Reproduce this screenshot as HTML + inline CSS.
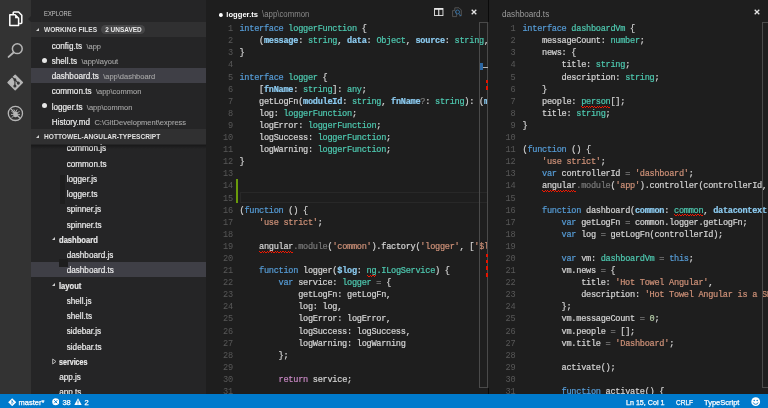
<!DOCTYPE html>
<html><head><meta charset="utf-8"><title>Visual Studio Code</title>
<style>
*{box-sizing:border-box;margin:0;padding:0}
html,body{width:768px;height:408px;overflow:hidden;background:#1e1e1e}
body{position:relative;font-family:"Liberation Sans",sans-serif;font-size:7.9px;color:#ccc}
#act{position:absolute;left:0;top:0;width:31px;height:394px;background:#333}
#act svg{position:absolute;left:0}
#side{position:absolute;left:31px;top:0;width:175px;height:394px;background:#252526;overflow:hidden}
#side .title{position:absolute;left:13px;top:8px;font-size:7.7px;color:#c4c4c4;line-height:11px;transform:scaleX(.765);transform-origin:0 0}
.hdr{position:absolute;left:0;width:175px;background:#303031;color:#e0e0e0;font-weight:bold;font-size:7.6px;white-space:nowrap}
.hdr b{position:absolute;left:13px;top:0;transform:scaleX(.867);transform-origin:0 0}
.hdr .tri{position:absolute;left:4.5px;width:0;height:0;border-style:solid;border-width:0 0 3.4px 3.4px;border-color:transparent transparent #d0d0d0 transparent}
.badge{position:absolute;left:70.3px;top:3.1px;height:8.8px;width:43.7px;border-radius:4.4px;background:#464647;color:#e8e8e8;font-size:6.9px;line-height:9.2px;text-align:center;font-weight:bold}
.badge u{display:inline-block;text-decoration:none;transform:scaleX(.94)}
.row{position:absolute;left:0;width:175px;height:15.25px;line-height:17px;white-space:nowrap;color:#ececec;font-size:8.15px;-webkit-text-stroke:.18px}
.row.sel{background:#3f3f46;height:15px}
#tree .row{line-height:17px}
.row .pa{color:#a6a6a6;-webkit-text-stroke:.1px;font-size:7.5px;margin-left:4.4px}
.row .fo{font-weight:bold;color:#e8e8e8;display:inline-block;transform:scaleX(.935);transform-origin:0 50%}
.dot{position:absolute;left:10.7px;top:4.9px;width:5px;height:5px;border-radius:50%;background:#e6e6e6}
.tw{position:absolute;top:5.6px;margin-left:.2px;width:0;height:0;border-style:solid}
.tw.o{border-width:0 0 3.8px 3.8px;border-color:transparent transparent #d0d0d0 transparent}
.tw.c{top:4.9px;margin-left:.2px;border-width:2.7px 0 2.7px 3.3px;border-color:transparent transparent transparent #b0b0b0}
.twc{position:absolute;top:4.3px}
.blk{position:absolute;background:#1e1e1e}
.shadow{position:absolute;left:0;width:175px;height:4px;background:linear-gradient(rgba(0,0,0,.35),rgba(0,0,0,0))}
.ed{position:absolute;top:0;height:394px;background:#1e1e1e;overflow:hidden}
#e1{left:206px;width:282px}
#e2{left:489px;width:279px}
#sep{position:absolute;left:488px;top:0;width:1px;height:22px;background:#0a0a0a}
#sep2{position:absolute;left:488px;top:388px;width:1px;height:6.2px;background:#0a0a0a}
.ed .tt{position:absolute;top:8.4px;line-height:12px;white-space:nowrap;font-size:8.7px;transform:scaleX(.94);transform-origin:0 0}
.code{position:absolute;left:0;top:23.2px;font-family:"Liberation Mono",monospace;font-size:8.6px;letter-spacing:-0.27px;color:#d4d4d4}
.ln{height:12.1px;line-height:12.1px;position:relative;white-space:pre;-webkit-text-stroke:.2px}
.no{display:inline-block;text-align:right;color:#585858;-webkit-text-stroke:0}
#e1 .ln{padding-left:0}
#e1 .no{width:26.9px;margin-right:6.6px}
#e2 .no{width:26.3px;margin-right:7.2px}
.k{color:#569cd6}.t{color:#4ec9b0}.s{color:#ce9178}.p{color:#8ccbf0;font-weight:bold}.g{color:#7a7a7a}.r{color:#c586c0}.n{color:#b5cea8}
.sq{position:relative}
.sq::after{content:"";position:absolute;left:0;right:0;top:8.8px;height:2.2px;background-image:repeating-linear-gradient(90deg,#f01800 0,#f01800 1.3px,transparent 1.3px,transparent 2.6px),repeating-linear-gradient(90deg,transparent 0,transparent 1.3px,#f01800 1.3px,#f01800 2.6px);background-size:100% 1.2px,100% 1.2px;background-position:0 0,0 1px;background-repeat:no-repeat}
.ruler{position:absolute;top:22px;height:366px;border:1px solid #4a4a4a}
.mk{position:absolute}
#status{position:absolute;left:0;top:394.2px;width:768px;height:14px;background:#007acc;color:#fff;font-size:7.5px;line-height:14px;white-space:nowrap}
#status span{position:absolute;top:1.5px;-webkit-text-stroke:.25px}
#status svg{position:absolute}
</style></head><body style="filter:blur(.35px)">
<div id="act">
 <!-- explorer -->
 <svg width="31" height="32" style="top:0" viewBox="0 0 31 32"><g fill="none" stroke="#fff" stroke-width="1.5" stroke-linejoin="round">
  <path d="M13.2 14v-1.300a.7.7 0 0 1 .7-.7h4.700l3.200 3.200v7.600a.7.700 0 0 1 -.7.700h-1.900"/>
  <path d="M9.800 14.800h5.300l3.500 3.500v7.200h-8.800z"/></g><path d="M15.100 14.800v3.500h3.500z" fill="#fff"/></svg>
 <!-- search -->
 <svg width="31" height="32" style="top:34px" viewBox="0 0 31 32"><g fill="none" stroke="#b6b6b6" stroke-linecap="round"><circle cx="17.3" cy="14.700" r="4.900" stroke-width="1.500"/><path d="M13.300 18.700L8.600 22.900" stroke-width="1.900"/></g></svg>
 <!-- git -->
 <svg width="31" height="140" style="top:0" viewBox="0 0 31 140">
  <path d="M15.200 75.300l7.200 7.200-7.200 7.200-7.200-7.200z" fill="#b6b6b6" stroke="#b6b6b6" stroke-width="1.400" stroke-linejoin="round"/>
  <g stroke="#333" stroke-width="1.100" fill="#333"><path d="M12.300 77.100l5.800 5.800M14.900 80v6" fill="none"/><circle cx="14.900" cy="79.800" r=".9"/><circle cx="14.900" cy="86" r="1"/><circle cx="18.300" cy="83.100" r="1"/></g>
  <!-- debug -->
  <g fill="none" stroke="#b6b6b6" stroke-width="1.300"><circle cx="15.400" cy="113.400" r="7.100"/><path d="M10.400 108.400l10 10"/></g>
  <ellipse cx="15.500" cy="114.200" rx="2.300" ry="3" fill="#b6b6b6"/>
  <g stroke="#b6b6b6" stroke-width=".9" fill="none"><path d="M11.400 111.400l2.400 1.400M11 114.400h2.600M11.600 117.600l2.200-1.600M19.600 111.400l-2.400 1.400M20 114.400h-2.600M19.400 117.600l-2.200-1.600M13.800 109.400l1.200 1.800M17.200 109.400l-1.200 1.800"/></g>
 </svg>
</div>
<div id="side">
 <div class="title">EXPLORE</div>
 <div class="hdr" style="top:22px;height:14.6px;line-height:15.6px"><i class="tri" style="top:5.6px"></i><b>WORKING FILES</b><span class="badge"><u>2 UNSAVED</u></span></div>
<div class="row" style="top:37.50px;padding-left:20.75px"><span class="nm">config.ts</span><span class="pa">\app</span></div>
<div class="row" style="top:52.75px;padding-left:20.75px"><i class="dot"></i><span class="nm">shell.ts</span><span class="pa">\app\layout</span></div>
<div class="row sel" style="top:68.00px;padding-left:20.75px"><span class="nm">dashboard.ts</span><span class="pa">\app\dashboard</span></div>
<div class="row" style="top:83.25px;padding-left:20.75px"><span class="nm">common.ts</span><span class="pa">\app\common</span></div>
<div class="row" style="top:98.50px;padding-left:20.75px"><i class="dot"></i><span class="nm">logger.ts</span><span class="pa">\app\common</span></div>
<div class="row" style="top:113.75px;padding-left:20.75px"><span class="nm">History.md</span><span class="pa">C:\GitDevelopment\express</span></div>

 <div id="tree">
<div class="row" style="top:140.38px;padding-left:35.75px"><span class="nm">common.js</span></div>
<div class="row" style="top:155.62px;padding-left:35.75px"><span class="nm">common.ts</span></div>
<div class="row" style="top:170.88px;padding-left:35.75px"><span class="nm">logger.js</span></div>
<div class="row" style="top:186.12px;padding-left:35.75px"><span class="nm">logger.ts</span></div>
<div class="row" style="top:201.38px;padding-left:35.75px"><span class="nm">spinner.js</span></div>
<div class="row" style="top:216.62px;padding-left:35.75px"><span class="nm">spinner.ts</span></div>
<div class="row" style="top:231.88px;padding-left:28.25px"><i class="tw o" style="left:21.2px"></i><span class="nm fo">dashboard</span></div>
<div class="row" style="top:247.12px;padding-left:35.75px"><span class="nm">dashboard.js</span></div>
<div class="row sel" style="top:262.38px;padding-left:35.75px"><span class="nm">dashboard.ts</span></div>
<div class="row" style="top:277.62px;padding-left:28.25px"><i class="tw o" style="left:21.2px"></i><span class="nm fo">layout</span></div>
<div class="row" style="top:292.88px;padding-left:35.75px"><span class="nm">shell.js</span></div>
<div class="row" style="top:308.12px;padding-left:35.75px"><span class="nm">shell.ts</span></div>
<div class="row" style="top:323.38px;padding-left:35.75px"><span class="nm">sidebar.js</span></div>
<div class="row" style="top:338.62px;padding-left:35.75px"><span class="nm">sidebar.ts</span></div>
<div class="row" style="top:353.88px;padding-left:28.25px"><svg class="twc" style="left:21.1px" width="5" height="7" viewBox="0 0 5 7"><path d="M.7 1l3.300 2.500-3.300 2.500z" fill="none" stroke="#c4c4c4" stroke-width=".9" stroke-linejoin="round"/></svg><span class="nm fo" style="transform:scaleX(.875)">services</span></div>
<div class="row" style="top:369.12px;padding-left:28.25px"><span class="nm">app.js</span></div>
<div class="row" style="top:384.38px;padding-left:28.25px"><span class="nm">app.ts</span></div>

 <div class="blk" style="left:28.5px;top:175px;width:5.5px;height:29px"></div>
 <div class="blk" style="left:27.5px;top:259.1px;width:9.3px;height:7.9px"></div>
 </div>
 <div class="hdr" style="top:129.4px;height:15.1px;line-height:15.4px"><i class="tri" style="top:5.7px"></i><b>HOTTOWEL-ANGULAR-TYPESCRIPT</b></div>
 <div class="shadow" style="top:144.5px"></div>
</div>
<i style="position:absolute;left:27.6px;top:15.6px;width:0;height:0;border-style:solid;border-width:3.4px 3.4px 3.4px 0;border-color:transparent #252526 transparent transparent"></i>
<div class="ed" id="e1">
 <div class="tt" style="left:12.6px;color:#fff"><i style="position:absolute;left:0;top:4.6px;width:3.6px;height:3.6px;border-radius:50%;background:#fff"></i><b style="margin-left:7.8px;font-size:8.1px">logger.ts</b><span style="color:#8a8a8a;margin-left:4.3px;font-size:8.3px">\app\common</span></div>
 <svg style="position:absolute;left:227.6px;top:8px" width="10" height="9" viewBox="0 0 10 9"><rect x=".1" y="0" width="9.3" height="8" fill="#e8e8e8"/><rect x="1" y="1.8" width="3.2" height="5.3" fill="#1e1e1e"/><rect x="5.3" y="1.8" width="3.2" height="5.3" fill="#1e1e1e"/></svg>
 <svg style="position:absolute;left:245.6px;top:7px" width="11" height="11" viewBox="0 0 11 11"><g fill="none" stroke="#585858" stroke-width=".9"><path d="M2.800 3.200V.8h4.200l2.300 2.300v5.700h-2.300"/><path d="M.6 3.600h2.400l1.600 1.600v4.400h-4z"/></g><g fill="none" stroke="#346c9c" stroke-width="1"><circle cx="5.500" cy="5" r="2"/><path d="M6.900 6.500l2.100 2.500"/></g></svg>
 <svg style="position:absolute;left:265.3px;top:9.4px" width="6" height="6" viewBox="0 0 6 6"><path d="M.7.7l4.6 4.6M5.300.7L.7 5.300" stroke="#e4e4e4" stroke-width="1.3" fill="none"/></svg>
 <div style="position:absolute;left:30px;top:179px;width:2.1px;height:24px;background:#6a9b0b"></div>
 <div style="position:absolute;left:33.6px;top:191.8px;width:260px;height:11.4px;border:1px solid #282828"></div>
 <div class="code">
<div class="ln"><span class="no">1</span><span class="k">interface</span> <span class="t">loggerFunction</span> {</div>
<div class="ln"><span class="no">2</span>    (<span class="p">message</span>: <span class="t">string</span>, <span class="p">data</span>: <span class="t">Object</span>, <span class="p">source</span>: <span class="t">string</span>, <span class="p">showToast</span>: <span class="t">boolean</span>): <span class="t">void</span>;</div>
<div class="ln"><span class="no">3</span>}</div>
<div class="ln"><span class="no">4</span></div>
<div class="ln"><span class="no">5</span><span class="k">interface</span> <span class="t">logger</span> {</div>
<div class="ln"><span class="no">6</span>    [<span class="p">fnName</span>: <span class="t">string</span>]: <span class="t">any</span>;</div>
<div class="ln"><span class="no">7</span>    getLogFn(<span class="p">moduleId</span>: <span class="t">string</span>, <span class="p">fnName</span><span class="g">?</span>: <span class="t">string</span>): (<span class="p">message</span>: <span class="t">string</span>) =&gt; <span class="t">void</span>;</div>
<div class="ln"><span class="no">8</span>    log: <span class="t">loggerFunction</span>;</div>
<div class="ln"><span class="no">9</span>    logError: <span class="t">loggerFunction</span>;</div>
<div class="ln"><span class="no">10</span>    logSuccess: <span class="t">loggerFunction</span>;</div>
<div class="ln"><span class="no">11</span>    logWarning: <span class="t">loggerFunction</span>;</div>
<div class="ln"><span class="no">12</span>}</div>
<div class="ln"><span class="no">13</span></div>
<div class="ln"><span class="no">14</span></div>
<div class="ln"><span class="no">15</span></div>
<div class="ln"><span class="no">16</span>(<span class="k">function</span> () {</div>
<div class="ln"><span class="no">17</span>    <span class="s">'use strict'</span>;</div>
<div class="ln"><span class="no">18</span></div>
<div class="ln"><span class="no">19</span>    <span class="d sq">angular</span><span class="g">.module</span>(<span class="s">'common'</span>).factory(<span class="s">'logger'</span>, [<span class="s">'$log'</span>, logger]);</div>
<div class="ln"><span class="no">20</span></div>
<div class="ln"><span class="no">21</span>    <span class="k">function</span> logger(<span class="p">$log</span>: <span class="t sq">ng</span><span class="t">.ILogService</span>) {</div>
<div class="ln"><span class="no">22</span>        <span class="k">var</span> service: <span class="t">logger</span><span class="g"> = </span>{</div>
<div class="ln"><span class="no">23</span>            getLogFn: getLogFn,</div>
<div class="ln"><span class="no">24</span>            log: log,</div>
<div class="ln"><span class="no">25</span>            logError: logError,</div>
<div class="ln"><span class="no">26</span>            logSuccess: logSuccess,</div>
<div class="ln"><span class="no">27</span>            logWarning: logWarning</div>
<div class="ln"><span class="no">28</span>        };</div>
<div class="ln"><span class="no">29</span></div>
<div class="ln"><span class="no">30</span>        <span class="r">return</span> service;</div>
<div class="ln"><span class="no">31</span></div>
 </div>
 <div class="ruler" style="left:273.2px;width:8.9px">
  <i class="mk" style="left:.2px;top:40.3px;width:2.3px;height:7px;background:#2b66a2"></i>
  <i class="mk" style="left:2.5px;top:44.3px;width:6px;height:1px;background:#b4b4b4"></i>
  <i class="mk" style="left:5.7px;top:57px;width:2.2px;height:3.3px;background:#e51400"></i>
  <i class="mk" style="left:5.7px;top:63px;width:2.2px;height:3.6px;background:#e51400"></i>
  <i class="mk" style="left:5.7px;top:230.6px;width:2.2px;height:3.5px;background:#e51400"></i>
  <i class="mk" style="left:5.7px;top:236.9px;width:2.2px;height:3.5px;background:#e51400"></i>
  <i class="mk" style="left:5.7px;top:243.2px;width:2.2px;height:3.8px;background:#e51400"></i>
  <i class="mk" style="left:5.7px;top:249.6px;width:2.2px;height:4.2px;background:#e51400"></i>
 </div>
</div>
<div id="sep"></div><div id="sep2"></div>
<div class="ed" id="e2">
 <div class="tt" style="left:12.8px;color:#9c9c9c">dashboard.ts</div>
 <svg style="position:absolute;left:264.6px;top:9.4px" width="6" height="6" viewBox="0 0 6 6"><path d="M.7.7l4.6 4.6M5.300.7L.7 5.300" stroke="#e4e4e4" stroke-width="1.3" fill="none"/></svg>
 <div class="code">
<div class="ln"><span class="no">1</span><span class="k">interface</span> <span class="t">dashboardVm</span> {</div>
<div class="ln"><span class="no">2</span>    messageCount: <span class="t">number</span>;</div>
<div class="ln"><span class="no">3</span>    news: {</div>
<div class="ln"><span class="no">4</span>        title: <span class="t">string</span>;</div>
<div class="ln"><span class="no">5</span>        description: <span class="t">string</span>;</div>
<div class="ln"><span class="no">6</span>    }</div>
<div class="ln"><span class="no">7</span>    people: <span class="t sq">person</span>[];</div>
<div class="ln"><span class="no">8</span>    title: <span class="t">string</span>;</div>
<div class="ln"><span class="no">9</span>}</div>
<div class="ln"><span class="no">10</span></div>
<div class="ln"><span class="no">11</span>(<span class="k">function</span> () {</div>
<div class="ln"><span class="no">12</span>    <span class="s">'use strict'</span>;</div>
<div class="ln"><span class="no">13</span>    <span class="k">var</span> controllerId<span class="g"> = </span><span class="s">'dashboard'</span>;</div>
<div class="ln"><span class="no">14</span>    <span class="d sq">angular</span><span class="g">.module</span>(<span class="s">'app'</span>).controller(controllerId, [<span class="s">'common'</span>, <span class="s">'datacontext'</span>, dashboard]);</div>
<div class="ln"><span class="no">15</span></div>
<div class="ln"><span class="no">16</span>    <span class="k">function</span> dashboard(<span class="p">common</span>: <span class="t sq">common</span>, <span class="p">datacontext</span>: <span class="t">datacontext</span>) {</div>
<div class="ln"><span class="no">17</span>        <span class="k">var</span> getLogFn<span class="g"> = </span>common.logger.getLogFn;</div>
<div class="ln"><span class="no">18</span>        <span class="k">var</span> log<span class="g"> = </span>getLogFn(controllerId);</div>
<div class="ln"><span class="no">19</span></div>
<div class="ln"><span class="no">20</span>        <span class="k">var</span> vm: <span class="t">dashboardVm</span><span class="g"> = </span><span class="k">this</span>;</div>
<div class="ln"><span class="no">21</span>        vm.news<span class="g"> = </span>{</div>
<div class="ln"><span class="no">22</span>            title: <span class="s">'Hot Towel Angular'</span>,</div>
<div class="ln"><span class="no">23</span>            description: <span class="s">'Hot Towel Angular is a SPA template for Angular developers.'</span></div>
<div class="ln"><span class="no">24</span>        };</div>
<div class="ln"><span class="no">25</span>        vm.messageCount<span class="g"> = </span><span class="n">0</span>;</div>
<div class="ln"><span class="no">26</span>        vm.people<span class="g"> = </span>[];</div>
<div class="ln"><span class="no">27</span>        vm.title<span class="g"> = </span><span class="s">'Dashboard'</span>;</div>
<div class="ln"><span class="no">28</span></div>
<div class="ln"><span class="no">29</span>        activate();</div>
<div class="ln"><span class="no">30</span></div>
<div class="ln"><span class="no">31</span>        <span class="k">function</span> activate() {</div>
 </div>
 <div class="ruler" style="left:273.3px;width:12px"></div>
</div>
<div id="status">
 <svg style="left:8.1px;top:3.7px" width="8.4" height="8.4" viewBox="0 0 8 8"><path d="M4 .2l3.800 3.800-3.800 3.800-3.800-3.800z" fill="#fff"/><path d="M3.800 2v4M3.800 2.800l1.600 1.600" stroke="#007acc" stroke-width=".8" fill="none"/></svg>
 <span style="left:18.6px">master*</span>
 <svg style="left:51.6px;top:4.1px" width="7.5" height="7.5" viewBox="0 0 7 7"><circle cx="3.500" cy="3.500" r="3.300" fill="#fff"/><path d="M2.100 2.100l2.800 2.800M4.900 2.100l-2.800 2.800" stroke="#007acc" stroke-width=".9"/></svg>
 <span style="left:62.4px">38</span>
 <svg style="left:73.9px;top:4.1px" width="8" height="7.4" viewBox="0 0 8 7" preserveAspectRatio="none"><path d="M4 .2l3.700 6.500h-7.400z" fill="#fff"/><path d="M4 2.400v2.200M4 5.200v.8" stroke="#007acc" stroke-width=".9"/></svg>
 <span style="left:84.4px">2</span>
 <span style="left:626px;transform:scaleX(.95);transform-origin:0 0">Ln 15, Col 1</span>
 <span style="left:675.8px;transform:scaleX(.87);transform-origin:0 0">CRLF</span>
 <span style="left:704px">TypeScript</span>
 <svg style="left:751.2px;top:3.2px" width="9.4" height="9.400" viewBox="0 0 10 10"><circle cx="5" cy="5" r="4.700" fill="#fff"/><circle cx="3.400" cy="3.800" r=".8" fill="#007acc"/><circle cx="6.600" cy="3.800" r=".8" fill="#007acc"/><path d="M2.400 5.800a2.700 2.700 0 0 0 5.200 0" fill="none" stroke="#007acc" stroke-width=".9"/></svg>
</div>
</body></html>
